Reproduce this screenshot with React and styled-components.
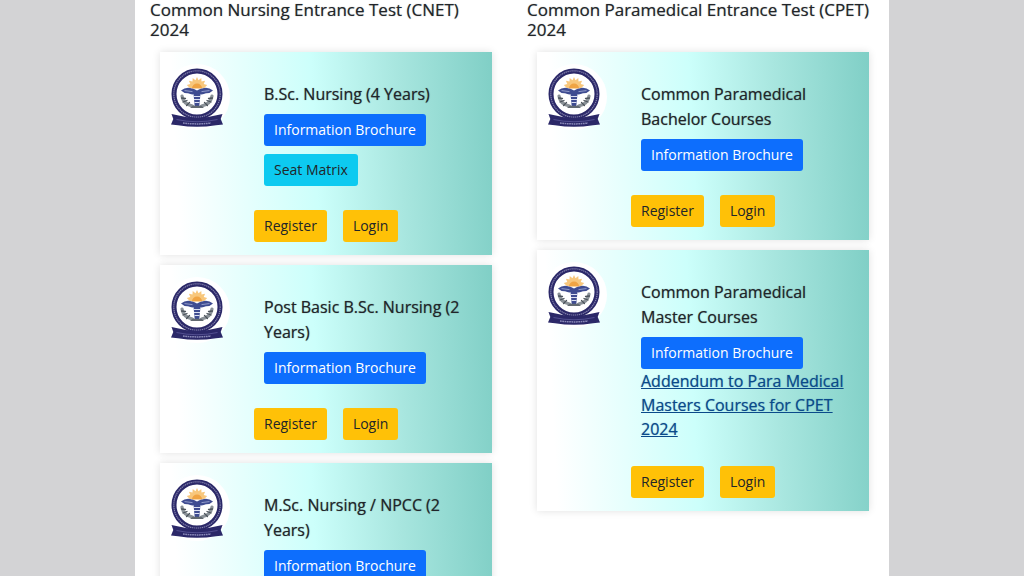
import React from 'react';
import styled, { createGlobalStyle } from 'styled-components';

const GlobalStyle = createGlobalStyle`
  * {
    box-sizing: border-box;
  }

  body {
    margin: 0;
    padding: 0 135px;
    background: #d3d3d5;
    color: #212529;
    font-family: "Open Sans", "Noto Sans", sans-serif;
    font-size: 16px;
    line-height: 24px;
  }
`;

const Page = styled.main`
  min-height: 100vh;
  padding-bottom: 20px;
  background: #ffffff;
`;

const Columns = styled.div`
  display: grid;
  grid-template-columns: 1fr 1fr;
`;

const Column = styled.section`
  padding: 0 15px;
`;

const Heading = styled.h2`
  margin: 0 0 12px;
  font-size: 17px;
  font-weight: 500;
  line-height: 20px;
  text-shadow: 0 0 1px rgba(33, 37, 41, 0.5);
`;

const CardList = styled.div`
  display: flex;
  flex-direction: column;
  gap: 10px;
  padding: 0 5px 0 10px;
`;

const Card = styled.article`
  display: grid;
  grid-template-columns: 94px 1fr;
  padding: 12px 8px 13px 0;
  background: linear-gradient(87deg, #ffffff 6%, #ccfffb 47%, #a8e6df 72%, #80cfc6 100%);
  box-shadow: 0 0 8px rgba(0, 0, 0, 0.12);
`;

const LogoDisc = styled.div`
  display: flex;
  width: 66px;
  height: 66px;
  margin-left: 4px;
  border-radius: 50%;
  background: #ffffff;
`;

const Details = styled.div`
  display: flex;
  flex-direction: column;
  align-items: flex-start;
  padding: 18px 0 0 10px;
`;

const CardTitle = styled.h3`
  margin: 0 0 7px;
  font-size: 16px;
  font-weight: 500;
  line-height: 25px;
  text-shadow: 0 0 1px rgba(33, 37, 41, 0.6);
`;

const Button = styled.button`
  height: 32px;
  padding: 0 10px 2px;
  border: 0;
  border-radius: 3px;
  background: ${(p) => p.$bg};
  color: ${(p) => p.$color || '#212529'};
  font-family: inherit;
  font-size: 14px;
  line-height: 21px;
  cursor: pointer;

  & + & {
    margin-top: 8px;
  }
`;

const Addendum = styled.a`
  margin-bottom: 1px;
  color: #0a4a8a;
  font-weight: 500;
  text-shadow: 0 0 1px rgba(10, 74, 138, 0.6);
`;

const Actions = styled.div`
  grid-column: 2;
  display: flex;
  gap: 16px;
  margin-top: 24px;

  ${Button} {
    margin-top: 0;
  }
`;

function Emblem() {
  return (
    <svg width="66" height="66" viewBox="0 0 66 66" role="img" aria-label="University emblem">
      {/* ring with its band of lettering */}
      <circle cx="33" cy="30" r="23" fill="#fff" stroke="#2b2868" strokeWidth="5" />
      <circle cx="33" cy="30" r="23.2" fill="none" stroke="#a9a8cc" strokeWidth="1.2" strokeDasharray="1.3 0.7" opacity="0.7" />
      {/* rising sun */}
      <path
        d="M33 13l1.500 3.200 2.800-2.200.2 3.500 3.600-.7-1.400 3.300 3.500 1-3 2.900H25.800l-3-2.900 3.500-1-1.400-3.300 3.600.7.2-3.500 2.800 2.200z"
        fill="#f8c77c"
      />
      <path d="M28 24.500a5 5 0 0 1 10 0z" fill="#f0a444" />
      {/* laurel */}
      <g fill="none" strokeLinecap="round">
        <path d="M18 32q1 8 10.500 10M48 32q-1 8-10.500 10" stroke="#8b9298" strokeWidth="3.200" />
        <path d="M17.500 34l4 .5M19 38l4-1.500M22.500 41.500l3-3M48.500 34l-4 .5M47 38l-4-1.500M43.500 41.500l-3-3" stroke="#4d545c" strokeWidth="1.300" />
      </g>
      {/* wings and staff */}
      <path d="M17 26.500q4-3.200 9-2.500 4.500.5 7 2.500 2.500-2 7-2.500 5-.7 9 2.500-3 3-7 2.800-3 1.400-5.500 1l-3.500.8-3.500-.8q-2.500.4-5.500-1-4 .2-7-2.800z" fill="#3f4c91" />
      <path d="M20.500 26.600l8 1M45.500 26.600l-8 1" stroke="#929ccb" strokeWidth="1" />
      <path d="M29.500 29.500h7l-1.200 12.500h-4.600z" fill="#3f4c91" />
      <path d="M29.500 32.500h7M30 35.500h6M30.500 38.500h5" stroke="#dde1f2" strokeWidth="1.100" />
      <path d="M26 44l2.500-2.300h9L40 44z" fill="#626970" />
      {/* ribbon */}
      <path d="M7.500 50l6 1.200Q33 56.500 52.500 51.200l6-1.200-1.800 5 2.300 5.500-7 .7q-19 3-38 0l-7-.7 2.300-5.500z" fill="#2b2868" />
      <path d="M19 59q14 1.800 28 0" fill="none" stroke="#8a89b8" strokeWidth="1.500" strokeDasharray="1.700 .6" />
      <path d="M12.500 55.500Q33 60 53.500 55.500" fill="none" stroke="#6360a0" strokeWidth=".7" />
    </svg>
  );
}

const columns = [
  {
    heading: 'Common Nursing Entrance Test (CNET) 2024',
    courses: [
      { title: 'B.Sc. Nursing (4 Years)', seatMatrix: true },
      { title: 'Post Basic B.Sc. Nursing (2 Years)' },
      { title: 'M.Sc. Nursing / NPCC (2 Years)' },
    ],
  },
  {
    heading: 'Common Paramedical Entrance Test (CPET) 2024',
    courses: [
      { title: 'Common Paramedical Bachelor Courses' },
      {
        title: 'Common Paramedical Master Courses',
        addendum: 'Addendum to Para Medical Masters Courses for CPET 2024',
      },
    ],
  },
];

function CourseCard({ course }) {
  return (
    <Card>
      <LogoDisc>
        <Emblem />
      </LogoDisc>
      <Details>
        <CardTitle>{course.title}</CardTitle>
        <Button $bg="#0d6efd" $color="#ffffff">Information Brochure</Button>
        {course.seatMatrix && <Button $bg="#0dcaf0">Seat Matrix</Button>}
        {course.addendum && <Addendum href="#addendum">{course.addendum}</Addendum>}
      </Details>
      <Actions>
        <Button $bg="#ffc107">Register</Button>
        <Button $bg="#ffc107">Login</Button>
      </Actions>
    </Card>
  );
}

export default function App() {
  return (
    <>
      <GlobalStyle />
      <Page>
        <Columns>
          {columns.map((column) => (
            <Column key={column.heading}>
              <Heading>{column.heading}</Heading>
              <CardList>
                {column.courses.map((course) => (
                  <CourseCard key={course.title} course={course} />
                ))}
              </CardList>
            </Column>
          ))}
        </Columns>
      </Page>
    </>
  );
}
